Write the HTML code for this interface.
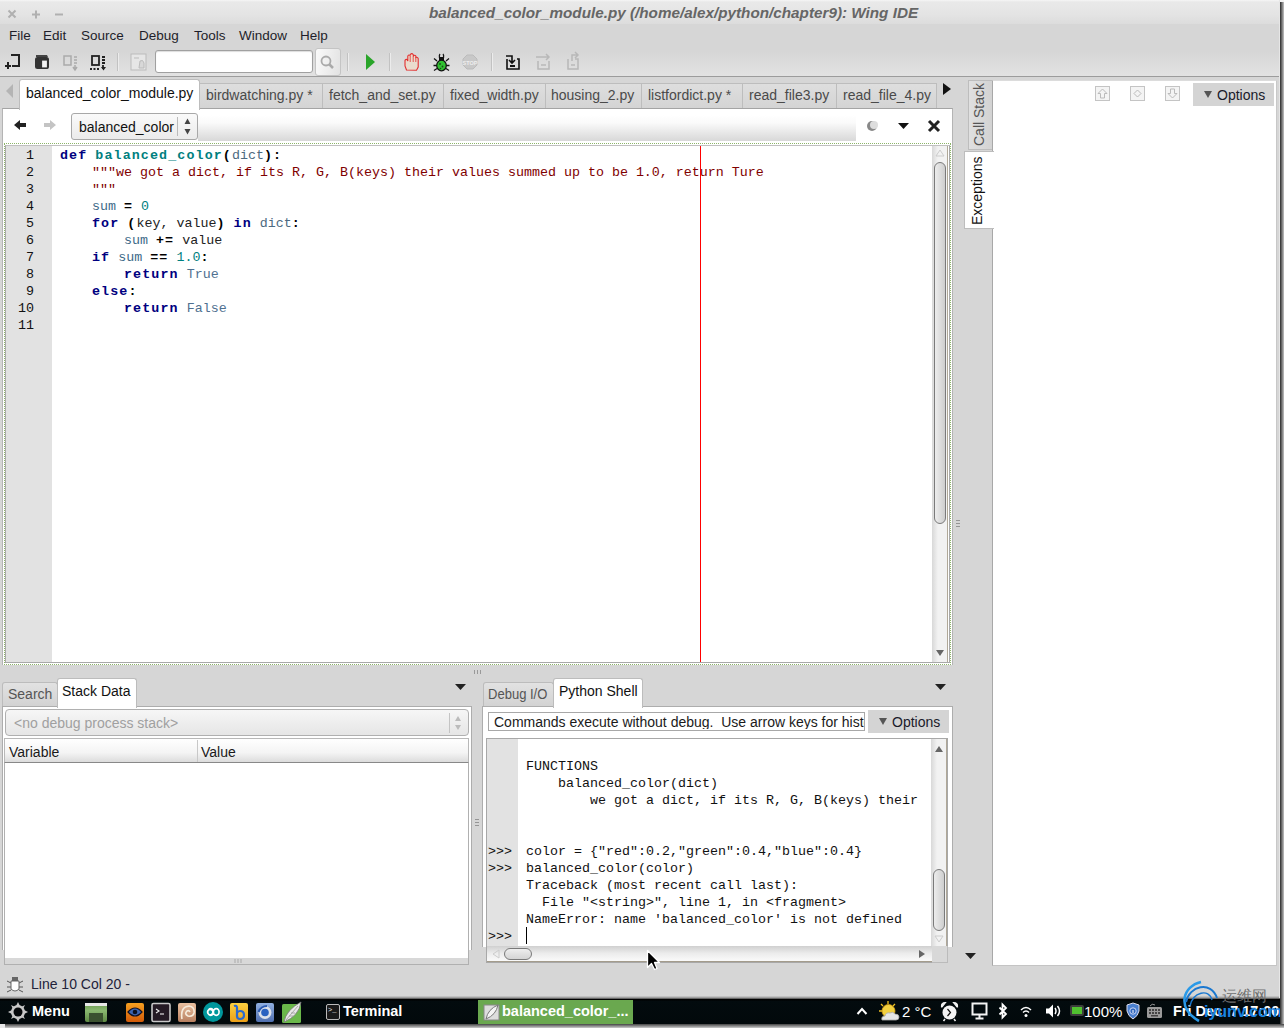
<!DOCTYPE html>
<html><head><meta charset="utf-8">
<style>
*{margin:0;padding:0;box-sizing:border-box}
html,body{width:1284px;height:1028px;overflow:hidden;background:#d6d6d6;font-family:"Liberation Sans",sans-serif;font-size:13px;color:#222}
.a{position:absolute}
.t{position:absolute;white-space:nowrap;line-height:1}
.mono{font-family:"Liberation Mono",monospace}
.menu{top:29px;font-size:13.5px;color:#1e1e2a}
.tab{top:83px;height:25px;background:linear-gradient(#dedede,#d4d4d4);border:1px solid #bdbdbd;border-bottom:none;}
.tabt{top:88px;font-size:14px;color:#4a4a4a}
.code{position:absolute;font-family:"Liberation Mono",monospace;font-size:13.33px;white-space:pre;line-height:17px}
.kw{color:#000080;font-weight:bold;letter-spacing:1.11px}
.fn{color:#007f7f;font-weight:bold;letter-spacing:1.11px}
.bi{color:#4d6a80}
.st{color:#7f0000}
.id{color:#3d6a88}
.nu{color:#008080}
.op{color:#000;font-weight:bold;letter-spacing:1.11px}
.cn{color:#4f7090}
.ln{position:absolute;left:3px;width:31px;text-align:right;font-family:"Liberation Mono",monospace;font-size:13.33px;line-height:17px;color:#111}
.sep{position:absolute;top:53px;width:1px;height:18px;background:#c2c2c2;box-shadow:1px 0 0 #ececec}
.ti{position:absolute;display:flex;align-items:center;justify-content:center}
</style></head><body>
<!-- window chrome -->
<div class="a" style="left:0;top:0;width:1280px;height:24px;background:linear-gradient(#f6f6f6,#e9e9e9 2px,#e4e4e4 60%,#dcdcdc)"></div>
<div class="a" style="left:0;top:24px;width:1280px;height:28px;background:#d6d6d6"></div>
<div class="a" style="left:0;top:52px;width:1280px;height:24px;background:linear-gradient(#d6d6d6,#e2e2e2)"></div>
<div class="a" style="left:0;top:76px;width:1280px;height:1px;background:#9c9c9c"></div>
<div class="a" style="left:0;top:77px;width:1280px;height:947px;background:#d6d6d6"></div>
<!-- shadows right/bottom -->

<!-- window buttons -->
<svg class="a" style="left:6px;top:8px" width="60" height="14">
<g stroke="#b0b0b0" stroke-width="2" fill="none">
<path d="M2.5 2.5 L9.5 9.5 M9.5 2.5 L2.5 9.5"/>
<path d="M26 6.5 L34 6.5 M30 2.5 L30 10.5"/>
<path d="M49 6.5 L57 6.5"/>
</g></svg>
<div class="t" style="left:429px;top:6px;font-weight:bold;font-style:italic;font-size:14px;color:#666;transform-origin:0 0;transform:scaleX(1.09)">balanced_color_module.py (/home/alex/python/chapter9): Wing IDE</div>

<div class="t menu" style="left:9px">File</div>
<div class="t menu" style="left:43px">Edit</div>
<div class="t menu" style="left:81px">Source</div>
<div class="t menu" style="left:139px">Debug</div>
<div class="t menu" style="left:194px">Tools</div>
<div class="t menu" style="left:239px">Window</div>
<div class="t menu" style="left:300px">Help</div>

<!-- toolbar icons -->
<svg class="a" style="left:0;top:47px" width="600" height="29">
<g transform="translate(0 1)">
 <!-- new -->
 <g fill="none" stroke="#222" stroke-width="2"><path d="M11 7 H19 V18 H12"/><path d="M8 14 V21 M5 18 H11"/></g>
 <!-- open -->
 <g><path d="M36 7 h11 l1 2 h-12z" fill="#444"/><rect x="35" y="9" width="14" height="12" rx="2.5" fill="#333"/><rect x="41.5" y="12" width="6" height="8" fill="#f2f2f2" stroke="#333" stroke-width="1.2"/></g>
 <!-- save (disabled) -->
 <g fill="none" stroke="#aaa" stroke-width="1.5"><rect x="64" y="8" width="7" height="9"/><path d="M74 9 h3 M74 12 h3 M74 15 h3"/><path d="M75 17 v4 M73 19 l2 3 l2 -3"/></g>
 <!-- save all -->
 <g fill="none" stroke="#222" stroke-width="1.8"><rect x="92" y="8" width="7" height="9"/><path d="M102 9 h3 M102 12 h3 M102 15 h3"/><path d="M90 21 h10" stroke-dasharray="2 1.5"/><path d="M103 17 v4"/></g>
 <path d="M101 19 l2.5 3.5 l2.5 -3.5z" fill="#222"/>
</g>
 <!-- indent (disabled) -->
 <rect x="131" y="7" width="15" height="16" fill="#e6e6e6" stroke="#bbb"/>
 <path d="M134 11 h5 M140 14 q3 -2 4 2 v5 h-5z" stroke="#bbb" fill="#d8d8d8"/>
 <!-- play -->
 <path d="M366 7 L375 15 L366 23z" fill="#2aa52a"/>
 <!-- hand -->
 <path d="M406.5 23 L405 19 L405 13.5 Q405.5 12 407 12.5 L407.8 14 L407.8 9 Q408.8 7.2 410 8.5 L410.3 7.5 Q411.8 5.8 413.2 7.5 L413.5 8.8 Q414.8 7.5 415.8 9 L416 10.5 Q417.5 9.8 418.2 11.5 L418.2 20 L416.5 23.2 Z" fill="#eadccd" stroke="#e23030" stroke-width="1.1"/>
 <path d="M410.2 9 V15 M413.2 8.5 V15 M415.8 10 V15" stroke="#e23030" stroke-width="0.8" fill="none"/>
 <!-- bug -->
 <g stroke="#151515" stroke-width="1.3" fill="none"><path d="M437 14 L434 11.5 M446 14 L449 11.5 M437 18.5 L433.5 18.5 M446 18.5 L449.5 18.5 M437 21.5 L434 23.5 M446 21.5 L449 23.5 M439.5 11 Q439 8 440 7 M443.5 11 Q444 8 443 7"/></g>
 <rect x="439" y="10" width="5" height="4" fill="#111"/>
 <ellipse cx="441.5" cy="18.5" rx="4.8" ry="5.3" fill="#30c030" stroke="#111" stroke-width="1.2"/>
 <circle cx="440" cy="17" r="0.9" fill="#174f17"/><circle cx="442.5" cy="19.5" r="0.9" fill="#174f17"/><circle cx="440.5" cy="21.5" r="0.8" fill="#174f17"/>
 <!-- stop -->
 <path d="M467 8 h6 l4 4 v6 l-4 4 h-6 l-4 -4 v-6z" fill="#c8c8c8" stroke="#bbb"/>
 <text x="470" y="18" font-size="5.5" font-family="Liberation Sans" font-weight="bold" fill="#eee" text-anchor="middle">STOP</text>
 <!-- step into -->
 <g fill="none" stroke="#111" stroke-width="1.6"><path d="M506 9 h6 v6 M509 13 l3 3 l3 -3"/><path d="M507 12 v10 h12 v-10 h-2"/></g>
 <rect x="510" y="18" width="5" height="2" fill="#111"/>
 <!-- step over (disabled) -->
 <g fill="none" stroke="#b8b8b8" stroke-width="1.5"><path d="M536 10 h13 M546 7 l3 3 l-3 3"/><path d="M538 14 v8 h11 v-8"/><path d="M541 18 h5"/></g>
 <!-- step out (disabled) -->
 <g fill="none" stroke="#b8b8b8" stroke-width="1.5"><path d="M568 12 v10 h10 v-10 h-3"/><path d="M572 14 v-6 h6 M575 5 l3 3 l-3 3"/><path d="M571 18 h4"/></g>
</svg>
<div class="sep" style="left:347px"></div>
<div class="sep" style="left:389px"></div>
<div class="sep" style="left:491px"></div>
<div class="sep" style="left:117px"></div>

<!-- search field -->
<div class="a" style="left:155px;top:50px;width:158px;height:23px;background:#fff;border:1px solid #a0a0a0;border-radius:3px;box-shadow:inset 0 1px 1px #ddd"></div>
<div class="a" style="left:315px;top:48px;width:26px;height:28px;background:linear-gradient(100deg,#fafafa,#e2e2e2);border:1px solid #c4c4c4;border-radius:3px"></div>
<svg class="a" style="left:318px;top:53px" width="20" height="18"><circle cx="8" cy="8" r="4.5" fill="none" stroke="#aaa" stroke-width="1.8"/><path d="M11 11 L15 15" stroke="#aaa" stroke-width="2.5"/></svg>

<!-- tab bar -->
<svg class="a" style="left:3px;top:82px" width="12" height="18"><path d="M10 2 L3 9 L10 16z" fill="#b4b4b4"/></svg>
<svg class="a" style="left:940px;top:82px" width="14" height="14"><path d="M3 1 L11 7 L3 13z" fill="#111"/></svg>
<div class="a tab" style="left:199px;width:124px"></div>
<div class="a tab" style="left:322px;width:122px"></div>
<div class="a tab" style="left:443px;width:103px"></div>
<div class="a tab" style="left:545px;width:97px"></div>
<div class="a tab" style="left:641px;width:102px"></div>
<div class="a tab" style="left:742px;width:95px"></div>
<div class="a tab" style="left:836px;width:101px"></div>
<div class="t tabt" style="left:206px">birdwatching.py *</div>
<div class="t tabt" style="left:329px">fetch_and_set.py</div>
<div class="t tabt" style="left:450px">fixed_width.py</div>
<div class="t tabt" style="left:551px">housing_2.py</div>
<div class="t tabt" style="left:648px">listfordict.py *</div>
<div class="t tabt" style="left:749px">read_file3.py</div>
<div class="t tabt" style="left:843px">read_file_4.py</div>

<!-- editor panel -->
<div class="a" style="left:2px;top:108px;width:951px;height:557px;background:#fff;border:1px solid #b4b4b4;border-top:1px solid #a4a4a4;border-bottom:none"></div>
<div class="a" style="left:19px;top:79px;width:181px;height:31px;background:#fff;border:1px solid #bdbdbd;border-bottom:none;border-radius:3px 3px 0 0"></div>
<div class="t" style="left:26px;top:86px;font-size:14px;color:#111">balanced_color_module.py</div>
<!-- nav arrows -->
<svg class="a" style="left:12px;top:118px" width="50" height="16"><path d="M2 7 L8 2 V5 H14 V9 H8 V12z" fill="#222"/><path d="M50 7 L44 2 V5 H38 V9 H44 V12z" fill="#c4c4c4" transform="translate(-6 0)"/></svg>
<!-- combo -->
<div class="a" style="left:71px;top:113px;width:127px;height:27px;background:linear-gradient(#fafafa,#ebebeb);border:1px solid #a8a8a8;border-radius:3px"></div>
<div class="t" style="left:79px;top:120px;font-size:14px;color:#111">balanced_color</div>
<div class="a" style="left:177px;top:117px;width:1px;height:19px;background:#bbb"></div>
<svg class="a" style="left:182px;top:117px" width="10" height="20"><path d="M5.5 1.5 L8.5 7 H2.5z M5.5 17.5 L8.5 12 H2.5z" fill="#444"/></svg>
<div class="a" style="left:198px;top:115px;width:658px;height:26px;background:linear-gradient(#fff,#fafafa 30%,#d8d8d8)"></div>
<!-- right icons -->
<svg class="a" style="left:860px;top:116px" width="90" height="20">
 <circle cx="12" cy="10" r="5" fill="#888"/><circle cx="14" cy="9" r="4" fill="#ddd"/>
 <path d="M38 7 H49 L43.5 13z" fill="#111"/>
 <path d="M69 5 L79 15 M79 5 L69 15" stroke="#222" stroke-width="3"/>
</svg>

<!-- editor -->
<div class="a" style="left:4px;top:143px;width:947px;height:522px;border:1px dotted #8db56a"></div>
<div class="a" style="left:5px;top:145px;width:945px;height:518px;border:1px solid #a8a8a8;border-top-color:#c0c0c0"></div>
<div class="a" style="left:6px;top:146px;width:46px;height:516px;background:#e2e2e2"></div>
<div class="a" style="left:700px;top:146px;width:1px;height:516px;background:#ff0000"></div>
<div class="a" style="left:932px;top:146px;width:16px;height:516px;background:linear-gradient(90deg,#d8d8d8,#f2f2f2 40%,#f2f2f2);border-right:1px solid #b0a898"></div>
<div class="a" style="left:934px;top:162px;width:12px;height:362px;background:linear-gradient(90deg,#ececec,#dcdcdc 55%,#cecece);border:1px solid #7a7a7a;border-radius:6px"></div>
<svg class="a" style="left:934px;top:147px" width="12" height="12"><path d="M6 3 L10 9 H2z" fill="none" stroke="#ccc"/></svg>
<svg class="a" style="left:934px;top:647px" width="12" height="12"><path d="M6 9 L10 3 H2z" fill="#666"/></svg>

<div class="ln" style="top:147px">1<br>2<br>3<br>4<br>5<br>6<br>7<br>8<br>9<br>10<br>11</div>
<div class="code" style="left:60px;top:147px"><span class="kw">def</span> <span class="fn">balanced_color</span><span class="op">(</span><span class="bi">dict</span><span class="op">):</span>
    <span class="st">"""we got a dict, if its R, G, B(keys) their values summed up to be 1.0, return Ture</span>
    <span class="st">"""</span>
    <span class="id">sum</span> <span class="op">=</span> <span class="nu">0</span>
    <span class="kw">for</span> <span class="op">(</span>key, value<span class="op">)</span> <span class="kw">in</span> <span class="bi">dict</span><span class="op">:</span>
        <span class="id">sum</span> <span class="op">+=</span> value
    <span class="kw">if</span> <span class="id">sum</span> <span class="op">==</span> <span class="nu">1.0</span><span class="op">:</span>
        <span class="kw">return</span> <span class="cn">True</span>
    <span class="kw">else</span><span class="op">:</span>
        <span class="kw">return</span> <span class="cn">False</span>
</div>

<!-- splitter handles -->
<svg class="a" style="left:472px;top:668px" width="10" height="8"><path d="M2.5 2 v4 M5.5 2 v4 M8.5 2 v4" stroke="#999"/></svg>
<svg class="a" style="left:955px;top:518px" width="8" height="12"><path d="M1 2.5 h4 M1 5.5 h4 M1 8.5 h4" stroke="#959595"/></svg>
<svg class="a" style="left:474px;top:817px" width="8" height="12"><path d="M1 2.5 h4 M1 5.5 h4 M1 8.5 h4" stroke="#959595"/></svg>

<!-- bottom left panel -->
<div class="a" style="left:2px;top:682px;width:56px;height:25px;background:linear-gradient(#e2e2e2,#d2d2d2);border:1px solid #bcbcbc;border-bottom:none;border-radius:3px 3px 0 0"></div>
<div class="t" style="left:8px;top:687px;font-size:14px;color:#555">Search</div>
<div class="a" style="left:2px;top:706px;width:470px;height:244px;background:#fff;border:1px solid #adadad;border-bottom:none"></div>
<div class="a" style="left:57px;top:678px;width:80px;height:30px;background:#fff;border:1px solid #bcbcbc;border-bottom:none;border-radius:3px 3px 0 0"></div>
<div class="t" style="left:62px;top:684px;font-size:14px;color:#111">Stack Data</div>
<svg class="a" style="left:453px;top:682px" width="14" height="10"><path d="M2 2 H13 L7.5 8z" fill="#222"/></svg>
<div class="a" style="left:5px;top:709px;width:464px;height:27px;background:linear-gradient(#f6f6f6,#e6e6e6);border:1px solid #b0b0b0;border-radius:4px"></div>
<div class="t" style="left:14px;top:716px;font-size:14px;color:#a0a0a0">&lt;no debug process stack&gt;</div>
<div class="a" style="left:449px;top:713px;width:1px;height:20px;background:#c4c4c4"></div>
<svg class="a" style="left:453px;top:713px" width="10" height="20"><path d="M5 3 L8 8 H2z M5 17 L8 12 H2z" fill="#bbb"/></svg>
<div class="a" style="left:4px;top:738px;width:465px;height:25px;background:linear-gradient(#fff,#f4f4f4 60%,#dcdcdc);border:1px solid #b8b8b8;border-bottom:1px solid #888"></div>
<div class="a" style="left:197px;top:740px;width:1px;height:22px;background:#c8c8c8"></div>
<div class="t" style="left:9px;top:745px;font-size:14px;color:#1a1a1a">Variable</div>
<div class="t" style="left:201px;top:745px;font-size:14px;color:#1a1a1a">Value</div>
<div class="a" style="left:4px;top:763px;width:465px;height:195px;background:#fff;border-left:1px solid #b0b0b0;border-right:1px solid #b0b0b0"></div>
<div class="a" style="left:4px;top:958px;width:465px;height:7px;background:#d8d8d8;border:1px solid #b0b0b0;border-top:none"></div>
<svg class="a" style="left:233px;top:958px" width="10" height="6"><path d="M2 1 v4 M5 1 v4 M8 1 v4" stroke="#aaa"/></svg>

<!-- bottom right panel -->
<div class="a" style="left:483px;top:682px;width:71px;height:25px;background:linear-gradient(#e2e2e2,#d2d2d2);border:1px solid #bcbcbc;border-bottom:none;border-radius:3px 3px 0 0"></div>
<div class="t" style="left:488px;top:687px;font-size:14px;color:#555;transform-origin:0 0;transform:scaleX(0.93)">Debug I/O</div>
<div class="a" style="left:482px;top:706px;width:471px;height:241px;background:#fff;border:1px solid #adadad;border-bottom:none"></div>
<div class="a" style="left:553px;top:678px;width:90px;height:30px;background:#fff;border:1px solid #bcbcbc;border-bottom:none;border-radius:3px 3px 0 0"></div>
<div class="t" style="left:559px;top:684px;font-size:14px;color:#111">Python Shell</div>
<svg class="a" style="left:933px;top:682px" width="14" height="10"><path d="M2 2 H13 L7.5 8z" fill="#222"/></svg>
<div class="a" style="left:488px;top:712px;width:377px;height:19px;background:#fff;border:1px solid #a8a8a8"></div>
<div class="t" style="left:494px;top:715px;font-size:14px;color:#1a1a1a;width:370px;overflow:hidden">Commands execute without debug.&nbsp; Use arrow keys for history</div>
<div class="a" style="left:868px;top:710px;width:81px;height:23px;background:#d4d4d4"></div>
<svg class="a" style="left:878px;top:716px" width="10" height="10"><path d="M1 2 H9 L5 9z" fill="#555"/></svg>
<div class="t" style="left:892px;top:715px;font-size:14px;color:#1a1a2a">Options</div>

<div class="a" style="left:486px;top:738px;width:462px;height:225px;border:1px solid #a8a8a8;background:#fff"></div>
<div class="a" style="left:487px;top:739px;width:31px;height:207px;background:#e2e2e2"></div>
<div class="code" style="left:526px;top:758px;color:#111">FUNCTIONS
    balanced_color(dict)
        we got a dict, if its R, G, B(keys) their


color = {"red":0.2,"green":0.4,"blue":0.4}
balanced_color(color)
Traceback (most recent call last):
  File "&lt;string&gt;", line 1, in &lt;fragment&gt;
NameError: name 'balanced_color' is not defined
</div>
<div class="code" style="left:488px;top:843px;color:#111">&gt;&gt;&gt;
&gt;&gt;&gt;



&gt;&gt;&gt;</div>
<div class="a" style="left:526px;top:927px;width:1px;height:17px;background:#000"></div>
<div class="a" style="left:931px;top:739px;width:16px;height:207px;background:linear-gradient(90deg,#d8d8d8,#f2f2f2 40%,#f2f2f2);border-right:1px solid #b0a898"></div>
<svg class="a" style="left:933px;top:743px" width="12" height="12"><path d="M6 3 L10 9 H2z" fill="#666"/></svg>
<div class="a" style="left:933px;top:869px;width:12px;height:62px;background:linear-gradient(90deg,#ececec,#dcdcdc 55%,#cecece);border:1px solid #7a7a7a;border-radius:6px"></div>
<svg class="a" style="left:933px;top:933px" width="12" height="12"><path d="M6 9 L10 3 H2z" fill="none" stroke="#ccc"/></svg>
<div class="a" style="left:487px;top:946px;width:445px;height:16px;background:linear-gradient(#d0d0d0,#ececec 50%,#fafafa);border-bottom:1px solid #a49c8c"></div>
<svg class="a" style="left:490px;top:948px" width="12" height="12"><path d="M3 6 L9 2 V10z" fill="none" stroke="#ccc"/></svg>
<div class="a" style="left:504px;top:948px;width:28px;height:12px;background:linear-gradient(#eee,#d4d4d4);border:1px solid #7a7a7a;border-radius:6px"></div>
<svg class="a" style="left:916px;top:948px" width="12" height="12"><path d="M9 6 L3 2 V10z" fill="#666"/></svg>
<div class="a" style="left:932px;top:946px;width:16px;height:17px;background:#d8d8d8;border:1px solid #bbb;border-top:none;border-left:none"></div>

<!-- right side tabs & panel -->
<div class="a" style="left:968px;top:80px;width:25px;height:70px;background:linear-gradient(90deg,#e0e0e0,#d2d2d2);border:1px solid #bdbdbd;border-right:none"></div>
<div class="t" style="left:972px;top:146px;font-size:14px;color:#555;transform-origin:0 0;transform:rotate(-90deg)">Call Stack</div>
<div class="a" style="left:992px;top:80px;width:285px;height:886px;background:#fff;border:1px solid #a8a8a8;border-right-color:#c8c8c8;border-top-color:#dcdcdc;border-bottom-color:#c4c4c4"></div>
<div class="a" style="left:964px;top:151px;width:30px;height:78px;background:#fff;border:1px solid #bdbdbd;border-right:none"></div>
<div class="t" style="left:970px;top:225px;font-size:14px;color:#111;transform-origin:0 0;transform:rotate(-90deg)">Exceptions</div>
<svg class="a" style="left:1093px;top:84px" width="90" height="20">
 <g fill="#f4f4f4" stroke="#c4c4c4"><rect x="2.5" y="2.5" width="14" height="14"/><rect x="37.5" y="2.5" width="14" height="14"/><rect x="72.5" y="2.5" width="14" height="14"/></g>
 <g fill="none" stroke="#bbb"><path d="M9.5 5 L14 9.5 H11.5 V14 H7.5 V9.5 H5z"/><path d="M44.5 6 L48 9.5 L44.5 13 L41 9.5z"/><path d="M79.5 14 L84 9.5 H81.5 V5 H77.5 V9.5 H75z"/></g>
</svg>
<div class="a" style="left:1193px;top:83px;width:81px;height:23px;background:#d4d4d4"></div>
<svg class="a" style="left:1203px;top:89px" width="10" height="10"><path d="M1 2 H9 L5 9z" fill="#555"/></svg>
<div class="t" style="left:1217px;top:88px;font-size:14px;color:#1a1a2a">Options</div>
<svg class="a" style="left:963px;top:951px" width="14" height="10"><path d="M2 2 H13 L7.5 8z" fill="#222"/></svg>

<!-- status bar -->
<svg class="a" style="left:5px;top:975px" width="20" height="18">
 <g stroke="#555" stroke-width="1"><path d="M2 6 l4 2 M2 12 h4 M2 17 l4 -2 M18 6 l-4 2 M18 12 h-4 M18 17 l-4 -2"/></g>
 <rect x="7" y="2" width="6" height="4" fill="#666"/>
 <path d="M6 6 h8 v8 q-4 4 -8 0z" fill="#fff" stroke="#666"/>
</svg>
<div class="t" style="left:31px;top:977px;font-size:14px;color:#22223a">Line 10 Col 20 -</div>

<!-- taskbar -->
<div class="a" style="left:0;top:996px;width:1280px;height:3px;background:linear-gradient(#d0d0d0,#a0a0a0 50%,#484848)"></div><div class="a" style="left:0;top:999px;width:1280px;height:25px;background:linear-gradient(#000 1px,#030b0e 2px,#02090b)"></div>
<svg class="a" style="left:6px;top:1001px" width="24" height="22"><g fill="#c8c8c8"><circle cx="12" cy="11" r="7"/>
<path d="M12 1 l2 4 h-4z M12 21 l2 -4 h-4z M2 11 l4 2 v-4z M22 11 l-4 2 v-4z M5 4 l4 2 l-2 2z M19 4 l-4 2 l2 2z M5 18 l4 -2 l-2 -2z M19 18 l-4 -2 l2 -2z"/></g><circle cx="12" cy="11" r="4.5" fill="#05080a"/></svg>
<div class="t" style="left:32px;top:1004px;font-size:14.5px;font-weight:bold;color:#fff">Menu</div>
<div class="a" style="left:85px;top:1003px;width:22px;height:19px;background:linear-gradient(#6a9a50,#8ab870 40%,#5e8a44);border-radius:2px"></div>
<div class="a" style="left:85px;top:1003px;width:22px;height:3px;background:#e8e8e8"></div>
<div class="a" style="left:89px;top:1013px;width:14px;height:9px;background:#3b5230"></div>
<svg class="a" style="left:124px;top:1001px" width="180" height="23">
 <defs>
  <linearGradient id="gor" x1="0" y1="0" x2="0" y2="1"><stop offset="0" stop-color="#f6a020"/><stop offset="1" stop-color="#d25a08"/></linearGradient>
  <linearGradient id="gbg" x1="0" y1="0" x2="0" y2="1"><stop offset="0" stop-color="#e8c0a0"/><stop offset="1" stop-color="#b88060"/></linearGradient>
  <linearGradient id="gye" x1="0" y1="0" x2="0" y2="1"><stop offset="0" stop-color="#fcd040"/><stop offset="1" stop-color="#eca018"/></linearGradient>
  <linearGradient id="gbl" x1="0" y1="0" x2="0" y2="1"><stop offset="0" stop-color="#90b0e0"/><stop offset="1" stop-color="#5070b0"/></linearGradient>
 </defs>
 <rect x="2" y="2" width="18" height="19" rx="2" fill="url(#gor)"/>
 <path d="M4 11 Q11 3 18 11 Q11 19 4 11z" fill="#3a64b0" stroke="#112" stroke-width="1.2"/>
 <circle cx="11" cy="11" r="2.3" fill="#0a1020"/>
 <rect x="28" y="2.5" width="18" height="18" rx="1.5" fill="#241a24" stroke="#c8c8c8" stroke-width="1.6"/>
 <path d="M32 8 L35 10 L32 12" fill="none" stroke="#eee" stroke-width="1.1"/><path d="M36 13 h4" stroke="#eee" stroke-width="1.1"/>
 <rect x="54" y="2" width="18" height="19" rx="2" fill="url(#gbg)"/>
 <path d="M58 18 Q56 6 65 5 Q71 6 70 12 Q69 16 64 15 Q60 13 63 10 Q65 9 66 11" fill="none" stroke="#f6ecdc" stroke-width="1.6"/>
 <circle cx="89" cy="11" r="10" fill="#00979c"/>
 <path d="M83.5 11 a2.7 2.7 0 1 1 0 0.1 M84 11 a2.8 2.8 0 1 0 5.5 0 a2.8 2.8 0 1 1 5.5 0 a2.8 2.8 0 1 1 -5.5 0 a2.8 2.8 0 1 0 -5.5 0" fill="none" stroke="#fff" stroke-width="1.6"/>
 <rect x="106" y="2" width="18" height="19" rx="2" fill="url(#gye)"/>
 <path d="M110 5 Q113 4 113 7 V15 Q113 18 116 18 Q120 18 120 14 Q120 10 116 10 Q114 10 113 12" fill="none" stroke="#2a6ad0" stroke-width="2.2"/>
 <rect x="132" y="2" width="18" height="19" rx="2" fill="url(#gbl)"/>
 <circle cx="141" cy="11.5" r="6.5" fill="#dde2ea"/><circle cx="141" cy="11.5" r="3.8" fill="#2a62c0"/><path d="M134.5 11 Q137 5 143 5" fill="none" stroke="#2a5ab0" stroke-width="2"/>
 <rect x="158" y="3" width="19" height="19" rx="1.5" fill="#6ab84a"/>
 <path d="M160 21 Q162 9 177 1 Q175 15 160 21z" fill="#e8e8e8" stroke="#777" stroke-width="0.8"/>
 <path d="M162 19 L174 5 M165 15 l4 0 M167 12 l4 0" stroke="#999" stroke-width="0.8"/>
</svg>
<div class="a" style="left:326px;top:1004px;width:14px;height:16px;background:#1a1a1a;border:1px solid #bbb;border-radius:2px"></div>
<div class="t" style="left:328px;top:1007px;font-size:7px;color:#eee;font-family:'Liberation Mono'">&gt;_</div>
<div class="t" style="left:343px;top:1004px;font-size:14.5px;font-weight:bold;color:#fff">Terminal</div>
<div class="a" style="left:478px;top:1000px;width:155px;height:24px;background:#6aa84f"></div>
<svg class="a" style="left:483px;top:1003px" width="18" height="18"><rect x="1" y="2" width="15" height="15" fill="#ddd" stroke="#888"/><path d="M3 16 Q5 6 15 2 Q13 12 3 16z" fill="#f4f4f4" stroke="#777"/></svg>
<div class="t" style="left:502px;top:1004px;font-size:14.5px;font-weight:bold;color:#fff">balanced_color_...</div>

<svg class="a" style="left:855px;top:1004px" width="14" height="14"><path d="M2.5 10 L7 5 L11.5 10" fill="none" stroke="#fff" stroke-width="2"/></svg>
<svg class="a" style="left:878px;top:1000px" width="24" height="24">
 <g stroke="#f0c020" stroke-width="1.3"><path d="M10 1 v3 M3 4 l2 2 M17 4 l-2 2 M1 11 h3"/></g>
 <circle cx="10.5" cy="11" r="6.5" fill="#f2d040" stroke="#d8a010" stroke-width="0.8"/>
 <path d="M4 20 Q3 16 7 16 Q8 12 12 13 Q15 11 17 14 Q21 14 21 17 Q21 20 18 20z" fill="#e6e6e6" stroke="#aaa" stroke-width="0.8"/>
</svg>
<div class="t" style="left:902px;top:1004px;font-size:15px;color:#fff">2 °C</div>
<svg class="a" style="left:940px;top:1001px" width="19" height="21">
 <path d="M1.5 6 Q1 1.5 5.5 1.5 L2 6z M17.5 6 Q18 1.5 13.5 1.5 L17 6z" fill="#f4f4f4" stroke="#f4f4f4" stroke-width="1.2"/>
 <circle cx="9.5" cy="11.5" r="7" fill="#f4f4f4"/>
 <path d="M7.5 8 L10.5 11.5 L7.5 15" fill="none" stroke="#111" stroke-width="1.2"/>
 <path d="M5 18 L3.5 20 M14 18 L15.5 20" stroke="#f4f4f4" stroke-width="1.5"/>
</svg>
<svg class="a" style="left:971px;top:1002px" width="17" height="18"><rect x="1.5" y="1.5" width="14" height="11" fill="none" stroke="#f4f4f4" stroke-width="2"/><path d="M8.5 13 v3 M4.5 16.5 h8" stroke="#f4f4f4" stroke-width="2"/></svg>
<svg class="a" style="left:998px;top:1002px" width="10" height="19"><path d="M1.5 5.5 L8 12 L4.5 15.5 V2.5 L8 6 L1.5 12.5" fill="none" stroke="#fff" stroke-width="1.8"/></svg>
<svg class="a" style="left:1020px;top:1003px" width="12" height="16"><path d="M1 7 q5 -5 10 0 M3 9.5 q3 -3 6 0" fill="none" stroke="#fff" stroke-width="1.5"/><circle cx="6" cy="12.5" r="1.5" fill="#fff"/></svg>
<svg class="a" style="left:1045px;top:1003px" width="16" height="16"><path d="M1 5.5 h3 l4 -4 v13 l-4 -4 h-3z" fill="#fff"/><path d="M10 5 q2 3 0 6 M12.5 3 q4 5 0 10" fill="none" stroke="#fff" stroke-width="1.5"/></svg>
<div class="a" style="left:1070px;top:1005px;width:14px;height:11px;background:#3c3c3c;border-radius:2px"></div>
<div class="a" style="left:1072px;top:1007px;width:10px;height:7px;background:#50c030"></div>
<div class="t" style="left:1084px;top:1004px;font-size:15px;color:#fff">100%</div>
<svg class="a" style="left:1126px;top:1002px" width="14" height="18"><path d="M7 1 L13 3 V9 Q12 14 7 17 Q2 14 1 9 V3z" fill="#4a80d0" stroke="#dde" stroke-width="1"/><circle cx="7" cy="9" r="3.2" fill="#3068c0" stroke="#eef" stroke-width="0.8"/><path d="M7 8 v3" stroke="#fff" stroke-width="1"/></svg>
<svg class="a" style="left:1146px;top:1002px" width="17" height="18"><path d="M4 4 Q6 1 9 3" fill="none" stroke="#999"/><rect x="1" y="5" width="15" height="11" rx="1.5" fill="#9a9a9a"/><g fill="#444"><rect x="3" y="7" width="2" height="2"/><rect x="6" y="7" width="2" height="2"/><rect x="9" y="7" width="2" height="2"/><rect x="12" y="7" width="2" height="2"/><rect x="3" y="10" width="2" height="2"/><rect x="6" y="10" width="2" height="2"/><rect x="9" y="10" width="2" height="2"/><rect x="12" y="10" width="2" height="2"/><rect x="5" y="13" width="7" height="1.5"/></g></svg>
<div class="t" style="left:1173px;top:1004px;font-size:14.5px;font-weight:bold;color:#fff">Fri Dec&nbsp; 7 17:00</div>
<!-- watermark -->
<svg class="a" style="left:1175px;top:978px" width="109" height="46">
 <path d="M26 4 C 8 8, 1 30, 24 43" fill="none" stroke="#2a9ae8" stroke-width="2.6"/>
 <path d="M11 24 C 14 8, 36 2, 42 20" fill="none" stroke="#1a78d0" stroke-width="2"/>
 <path d="M15 28 C 18 14, 34 10, 37 22" fill="none" stroke="#1a78d0" stroke-width="1.4"/>
 <text x="47" y="23" font-size="15" font-family="Liberation Sans" fill="#707070">运维网</text>
 <text x="29" y="39" font-size="16" font-weight="bold" font-family="Liberation Sans" fill="#1a84e0">iyunv.com</text>
</svg>
<svg class="a" style="left:646px;top:949px" width="16" height="22"><path d="M1.5 1.5 L1.5 18.5 L5.5 14.5 L8.5 20.5 L11 19.5 L8.5 13.5 L13.5 13.5 Z" fill="#000" stroke="#fff" stroke-width="1.3" stroke-linejoin="round"/></svg>
<div class="a" style="left:1279px;top:0;width:1px;height:998px;background:#e6e6e6"></div><div class="a" style="left:1280px;top:2px;width:4px;height:1026px;background:linear-gradient(90deg,#2a2a2a,#777 50%,#c4c4c4)"></div><div class="a" style="left:1280px;top:0;width:4px;height:2px;background:#f4f4f4"></div>
<div class="a" style="left:4px;top:1024px;width:1280px;height:4px;background:linear-gradient(#444,#ccc)"></div>
<div class="a" style="left:0;top:1024px;width:5px;height:4px;background:#e8e8e8"></div>
</body></html>
